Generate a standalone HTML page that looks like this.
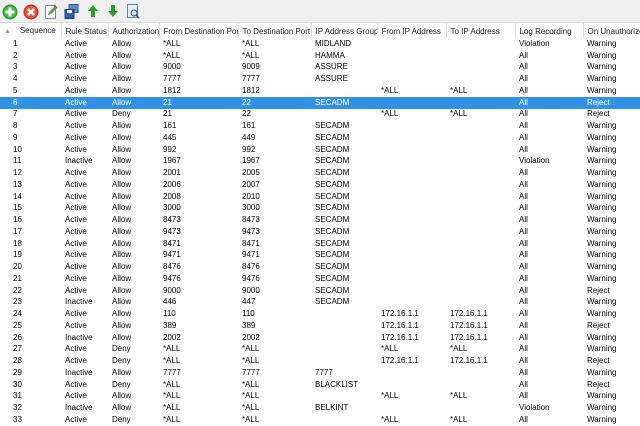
<!DOCTYPE html>
<html><head><style>
body{margin:0;width:640px;height:423px;overflow:hidden;background:#fff;font-family:"Liberation Sans",sans-serif;font-size:8px;color:#000;position:relative}
.tb{position:absolute;left:0;top:0;width:640px;height:22px;background:#f0f0f0;border-bottom:1px solid #d8d8d8}
.tb svg{position:absolute;top:4px}
table{position:absolute;left:0;top:23px;border-collapse:collapse;table-layout:fixed;width:640px}
th{height:14px;line-height:13px;font-weight:normal;text-align:left;padding:1px 0 0 4px;border-right:1px solid #e0e0e0;white-space:nowrap;overflow:hidden;color:#222;box-sizing:border-box}
tr{height:11.75px}
td{height:11.75px;padding:0 0 0 4px;white-space:nowrap;overflow:hidden;line-height:10px;border:none;box-sizing:border-box}
td:first-child{padding-left:13px}
tr.s td{background:#3092e4;color:#fff}
</style></head><body>
<div class="tb">
<svg style="left:2px" width="16" height="16" viewBox="0 0 16 16"><circle cx="8" cy="8" r="7.5" fill="#2e9c2e"/><circle cx="8" cy="8" r="6" fill="#45b845"/><path d="M6.5 3.5h3v3h3v3h-3v3h-3v-3h-3v-3h3z" fill="#fff"/></svg>
<svg style="left:23px" width="16" height="16" viewBox="0 0 16 16"><circle cx="8" cy="8" r="7.5" fill="#c83020"/><circle cx="8" cy="8" r="6" fill="#ea5a3a"/><path d="M5 5l6 6M11 5l-6 6" stroke="#fff" stroke-width="2.4"/></svg>
<svg style="left:45px" width="13" height="15" viewBox="0 0 13 15"><rect x="0.5" y="1.5" width="10" height="13" fill="#fff" stroke="#6b8fb5"/><path d="M3 11l1-3 6-6 2 2-6 6z" fill="#5aa040"/><path d="M9 1l3 3" stroke="#d04030" stroke-width="1.5"/></svg>
<svg style="left:64px" width="15" height="15" viewBox="0 0 15 15"><rect x="5" y="0.5" width="9" height="8" fill="#5a8ad0" stroke="#2a5aa0"/><rect x="1" y="5.5" width="9" height="9" fill="#2a60b8" stroke="#1a4080"/><rect x="3" y="6" width="5" height="3" fill="#fff"/></svg>
<svg style="left:87px" width="12" height="14" viewBox="0 0 12 14"><path d="M6 1l5 6H8v6H4V7H1z" fill="#28a028"/></svg>
<svg style="left:107px" width="12" height="14" viewBox="0 0 12 14"><path d="M6 13l5-6H8V1H4v6H1z" fill="#28a028"/></svg>
<svg style="left:127px" width="14" height="15" viewBox="0 0 14 15"><rect x="0.5" y="0.5" width="10" height="13" fill="#e8eef8" stroke="#6080b0"/><circle cx="7" cy="9" r="3" fill="#cfe0f5" stroke="#305080"/><path d="M9 11l3 3" stroke="#305080" stroke-width="1.5"/></svg>
</div>
<table>
<colgroup><col style="width:61px"><col style="width:47px"><col style="width:51px"><col style="width:79px"><col style="width:73px"><col style="width:66px"><col style="width:69px"><col style="width:69px"><col style="width:68px"><col style="width:57px"></colgroup>
<tr style="height:14px"><th><span style="color:#999;font-size:7px">▲</span>&nbsp;&nbsp;&nbsp;&nbsp;Sequence</th><th>Rule Status</th><th>Authorization</th><th>From Destination Port</th><th>To Destination Port</th><th>IP Address Group</th><th>From IP Address</th><th>To IP Address</th><th>Log Recording</th><th>On Unauthorize</th></tr>
<tr><td>1</td><td>Active</td><td>Allow</td><td>*ALL</td><td>*ALL</td><td>MIDLAND</td><td></td><td></td><td>Violation</td><td>Warning</td></tr>
<tr><td>2</td><td>Active</td><td>Allow</td><td>*ALL</td><td>*ALL</td><td>HAMMA</td><td></td><td></td><td>All</td><td>Warning</td></tr>
<tr><td>3</td><td>Active</td><td>Allow</td><td>9000</td><td>9009</td><td>ASSURE</td><td></td><td></td><td>All</td><td>Warning</td></tr>
<tr><td>4</td><td>Active</td><td>Allow</td><td>7777</td><td>7777</td><td>ASSURE</td><td></td><td></td><td>All</td><td>Warning</td></tr>
<tr><td>5</td><td>Active</td><td>Allow</td><td>1812</td><td>1812</td><td></td><td>*ALL</td><td>*ALL</td><td>All</td><td>Warning</td></tr>
<tr class="s"><td>6</td><td>Active</td><td>Allow</td><td>21</td><td>22</td><td>SECADM</td><td></td><td></td><td>All</td><td>Reject</td></tr>
<tr><td>7</td><td>Active</td><td>Deny</td><td>21</td><td>22</td><td></td><td>*ALL</td><td>*ALL</td><td>All</td><td>Reject</td></tr>
<tr><td>8</td><td>Active</td><td>Allow</td><td>161</td><td>161</td><td>SECADM</td><td></td><td></td><td>All</td><td>Warning</td></tr>
<tr><td>9</td><td>Active</td><td>Allow</td><td>445</td><td>449</td><td>SECADM</td><td></td><td></td><td>All</td><td>Warning</td></tr>
<tr><td>10</td><td>Active</td><td>Allow</td><td>992</td><td>992</td><td>SECADM</td><td></td><td></td><td>All</td><td>Warning</td></tr>
<tr><td>11</td><td>Inactive</td><td>Allow</td><td>1967</td><td>1967</td><td>SECADM</td><td></td><td></td><td>Violation</td><td>Warning</td></tr>
<tr><td>12</td><td>Active</td><td>Allow</td><td>2001</td><td>2005</td><td>SECADM</td><td></td><td></td><td>All</td><td>Warning</td></tr>
<tr><td>13</td><td>Active</td><td>Allow</td><td>2006</td><td>2007</td><td>SECADM</td><td></td><td></td><td>All</td><td>Warning</td></tr>
<tr><td>14</td><td>Active</td><td>Allow</td><td>2008</td><td>2010</td><td>SECADM</td><td></td><td></td><td>All</td><td>Warning</td></tr>
<tr><td>15</td><td>Active</td><td>Allow</td><td>3000</td><td>3000</td><td>SECADM</td><td></td><td></td><td>All</td><td>Warning</td></tr>
<tr><td>16</td><td>Active</td><td>Allow</td><td>8473</td><td>8473</td><td>SECADM</td><td></td><td></td><td>All</td><td>Warning</td></tr>
<tr><td>17</td><td>Active</td><td>Allow</td><td>9473</td><td>9473</td><td>SECADM</td><td></td><td></td><td>All</td><td>Warning</td></tr>
<tr><td>18</td><td>Active</td><td>Allow</td><td>8471</td><td>8471</td><td>SECADM</td><td></td><td></td><td>All</td><td>Warning</td></tr>
<tr><td>19</td><td>Active</td><td>Allow</td><td>9471</td><td>9471</td><td>SECADM</td><td></td><td></td><td>All</td><td>Warning</td></tr>
<tr><td>20</td><td>Active</td><td>Allow</td><td>8476</td><td>8476</td><td>SECADM</td><td></td><td></td><td>All</td><td>Warning</td></tr>
<tr><td>21</td><td>Active</td><td>Allow</td><td>9476</td><td>9476</td><td>SECADM</td><td></td><td></td><td>All</td><td>Warning</td></tr>
<tr><td>22</td><td>Active</td><td>Allow</td><td>9000</td><td>9000</td><td>SECADM</td><td></td><td></td><td>All</td><td>Reject</td></tr>
<tr><td>23</td><td>Inactive</td><td>Allow</td><td>446</td><td>447</td><td>SECADM</td><td></td><td></td><td>All</td><td>Warning</td></tr>
<tr><td>24</td><td>Active</td><td>Allow</td><td>110</td><td>110</td><td></td><td>172.16.1.1</td><td>172.16.1.1</td><td>All</td><td>Warning</td></tr>
<tr><td>25</td><td>Active</td><td>Allow</td><td>389</td><td>389</td><td></td><td>172.16.1.1</td><td>172.16.1.1</td><td>All</td><td>Reject</td></tr>
<tr><td>26</td><td>Inactive</td><td>Allow</td><td>2002</td><td>2002</td><td></td><td>172.16.1.1</td><td>172.16.1.1</td><td>All</td><td>Warning</td></tr>
<tr><td>27</td><td>Active</td><td>Deny</td><td>*ALL</td><td>*ALL</td><td></td><td>*ALL</td><td>*ALL</td><td>All</td><td>Warning</td></tr>
<tr><td>28</td><td>Active</td><td>Deny</td><td>*ALL</td><td>*ALL</td><td></td><td>172.16.1.1</td><td>172.16.1.1</td><td>All</td><td>Reject</td></tr>
<tr><td>29</td><td>Inactive</td><td>Allow</td><td>7777</td><td>7777</td><td>7777</td><td></td><td></td><td>All</td><td>Warning</td></tr>
<tr><td>30</td><td>Active</td><td>Deny</td><td>*ALL</td><td>*ALL</td><td>BLACKLIST</td><td></td><td></td><td>All</td><td>Reject</td></tr>
<tr><td>31</td><td>Active</td><td>Allow</td><td>*ALL</td><td>*ALL</td><td></td><td>*ALL</td><td>*ALL</td><td>All</td><td>Warning</td></tr>
<tr><td>32</td><td>Inactive</td><td>Allow</td><td>*ALL</td><td>*ALL</td><td>BELKINT</td><td></td><td></td><td>Violation</td><td>Warning</td></tr>
<tr><td>33</td><td>Active</td><td>Deny</td><td>*ALL</td><td>*ALL</td><td></td><td>*ALL</td><td>*ALL</td><td>All</td><td>Warning</td></tr>
</table>
</body></html>
